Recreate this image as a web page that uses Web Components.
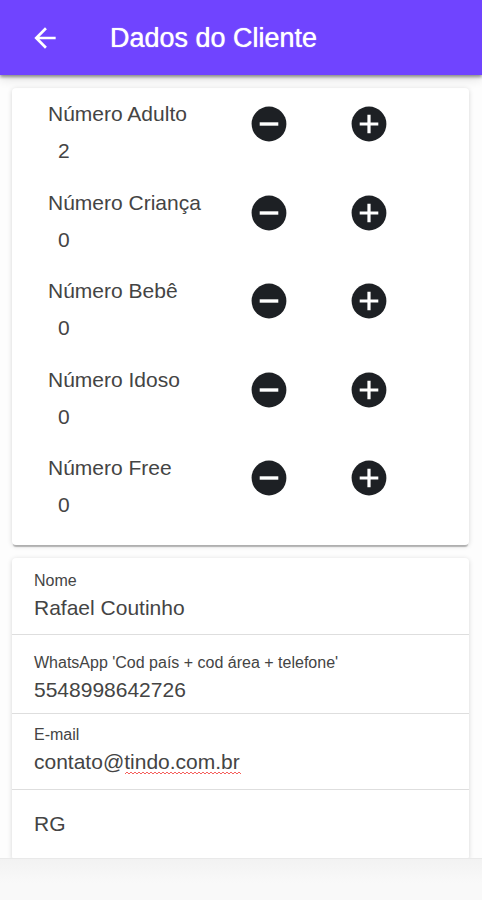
<!DOCTYPE html>
<html lang="pt-BR">
<head>
<meta charset="utf-8">
<meta name="viewport" content="width=device-width, initial-scale=1">
<title>Dados do Cliente</title>
<style>
  html, body { margin: 0; height: 100%; }
  body { font-family: "Liberation Sans", Arial, sans-serif; color: #444; background: #fdfdfd; }
</style>
</head>
<body>
<client-page>
  <app-header slot="header">Dados do Cliente</app-header>
  <surface-card>
    <counter-list>
      <guest-counter name="Número Adulto" value="2"></guest-counter>
      <guest-counter name="Número Criança" value="0"></guest-counter>
      <guest-counter name="Número Bebê" value="0"></guest-counter>
      <guest-counter name="Número Idoso" value="0"></guest-counter>
      <guest-counter name="Número Free" value="0"></guest-counter>
    </counter-list>
  </surface-card>
  <surface-card>
    <form-field label="Nome" value="Rafael Coutinho"></form-field>
    <form-field class="low" label="WhatsApp 'Cod país + cod área + telefone'" value="5548998642726" type="tel"></form-field>
    <form-field class="high" label="E-mail" value="contato@tindo.com.br" type="email" flagged></form-field>
    <form-field label="RG" bare></form-field>
  </surface-card>
</client-page>

<script>
class ClientPage extends HTMLElement {
  constructor() {
    super();
    this.attachShadow({ mode: 'open' }).innerHTML = `
      <style>
        :host { display: flex; flex-direction: column; height: 100vh; }
        main { flex: 1; min-height: 0; overflow-y: auto; scrollbar-width: none; display: flex; flex-direction: column; gap: 13px; padding: 13px 13px 0 12px; }
        footer { height: 41px; flex: none; border-top: 1px solid #e9e9e9; background: linear-gradient(#f2f2f2, #f9f9f9 24px); }
      </style>
      <slot name="header"></slot>
      <main><slot></slot></main>
      <footer></footer>`;
  }
}

class AppHeader extends HTMLElement {
  constructor() {
    super();
    this.attachShadow({ mode: 'open' }).innerHTML = `
      <style>
        :host { display: block; flex: none; position: relative; z-index: 1; background: #7044ff; color: #fff; box-shadow: 0 2px 3px rgba(0,0,0,.4), 0 4px 10px rgba(0,0,0,.12); }
        header { display: flex; align-items: center; gap: 49px; height: 75px; padding: 0 29px; box-sizing: border-box; }
        button { all: unset; display: flex; cursor: pointer; }
        h1 { margin: 0; font-size: 27px; line-height: 32px; font-weight: 400; text-shadow: 0 0 1px #fff; }
      </style>
      <header>
        <button type="button" aria-label="Voltar">
          <svg width="32" height="32" viewBox="0 0 24 24" fill="#fff"><path d="M20 11H7.83l5.59-5.59L12 4l-8 8 8 8 1.41-1.41L7.83 13H20z"/></svg>
        </button>
        <h1><slot></slot></h1>
      </header>`;
  }
}

class SurfaceCard extends HTMLElement {
  constructor() {
    super();
    this.attachShadow({ mode: 'open' }).innerHTML = `
      <style>
        :host { display: block; flex: none; background: #fff; border-radius: 4px; box-shadow: 0 3px 1px -1px rgba(0,0,0,.24), 0 1px 5px rgba(0,0,0,.16); }
      </style>
      <slot></slot>`;
  }
}

class CounterList extends HTMLElement {
  constructor() {
    super();
    this.attachShadow({ mode: 'open' }).innerHTML = `
      <style>
        :host { display: grid; grid-auto-rows: 1fr; min-height: 443px; padding: 7px 50px 7px 6px; }
      </style>
      <slot></slot>`;
  }
}

class GuestCounter extends HTMLElement {
  connectedCallback() {
    if (this.shadowRoot) return;
    const name = this.getAttribute('name');
    const root = this.attachShadow({ mode: 'open' });
    root.innerHTML = `
      <style>
        :host { display: grid; grid-template-columns: 2fr 1fr 1fr; align-items: start; justify-items: center; font-size: 21px; line-height: 37px; }
        .text { justify-self: stretch; padding-left: 30px; white-space: nowrap; }
        label, output { display: block; }
        output { padding-left: 10px; }
        button { all: unset; display: flex; margin-top: 11px; cursor: pointer; }
      </style>
      <div class="text"><label for="n">${name}</label><output id="n">${this.getAttribute('value')}</output></div>
      <button type="button" data-step="-1" aria-label="Diminuir ${name}">
        <svg width="36" height="36" viewBox="0 0 36 36"><circle cx="18" cy="18" r="17.4" fill="#1d2024"/><path d="M8.7 18h18.6" stroke="#fff" stroke-width="3.4"/></svg>
      </button>
      <button type="button" data-step="1" aria-label="Aumentar ${name}">
        <svg width="36" height="36" viewBox="0 0 36 36"><circle cx="18" cy="18" r="17.4" fill="#1d2024"/><path d="M8.7 18h18.6M18 8.7v18.6" stroke="#fff" stroke-width="3.2"/></svg>
      </button>`;
    const out = root.querySelector('output');
    root.querySelectorAll('button').forEach(b => b.addEventListener('click', () => {
      out.value = Math.max(0, Number(out.value) + Number(b.dataset.step));
    }));
  }
}

class FormField extends HTMLElement {
  connectedCallback() {
    if (this.shadowRoot) return;
    const label = this.getAttribute('label');
    const bare = this.hasAttribute('bare');
    this.attachShadow({ mode: 'open' }).innerHTML = `
      <style>
        :host { display: block; padding: 11px 22px; border-bottom: 1px solid #dedede; }
        :host(.low) { padding: 16px 22px 8px; }
        :host(.high) { padding: 9px 22px 12px; }
        :host([bare]) { padding: 19px 22px 20px; }
        label { display: block; font-size: 16px; line-height: 24px; }
        .box { position: relative; }
        input { display: block; box-sizing: border-box; width: 100%; height: 30px; margin: 0; padding: 0; border: 0; outline: 0; background: none; font: inherit; font-size: 21px; color: inherit; }
        input::placeholder { color: inherit; opacity: 1; }
        svg { position: absolute; left: 91px; top: 24px; }
      </style>
      ${bare ? '' : `<label for="i">${label}</label>`}
      <div class="box">
        <input id="i" type="${this.getAttribute('type') || 'text'}" value="${this.getAttribute('value') || ''}" ${bare ? `placeholder="${label}" aria-label="${label}"` : ''}>
        ${this.hasAttribute('flagged') ? `<svg width="116" height="4" aria-hidden="true"><defs><pattern id="w" width="4" height="4" patternUnits="userSpaceOnUse"><path d="M0 3L2 1L4 3" fill="none" stroke="#f4605c"/></pattern></defs><rect width="116" height="4" fill="url(#w)"/></svg>` : ''}
      </div>`;
  }
}

customElements.define('client-page', ClientPage);
customElements.define('app-header', AppHeader);
customElements.define('surface-card', SurfaceCard);
customElements.define('counter-list', CounterList);
customElements.define('guest-counter', GuestCounter);
customElements.define('form-field', FormField);
</script>
</body>
</html>
